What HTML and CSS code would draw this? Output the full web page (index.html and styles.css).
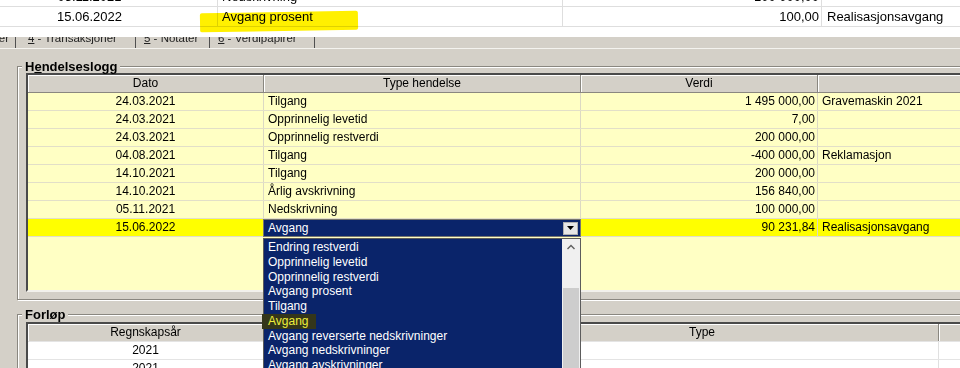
FILE: index.html
```html
<!DOCTYPE html>
<html lang="no">
<head>
    <meta charset="UTF-8">
    <title>Hendelseslogg</title>
    <link rel="stylesheet" href="styles.css">
</head>
<body>
<div class="top-table">
    <div class="tt-row">
        <div class="tt-date">05.11.2021</div>
        <div class="tt-type">Nedskrivning</div>
        <div class="tt-val">100 000,00</div>
        <div class="tt-note"></div>
    </div>
    <div class="tt-row">
        <div class="tt-date">15.06.2022</div>
        <div class="tt-type">Avgang prosent</div>
        <div class="tt-val">100,00</div>
        <div class="tt-note">Realisasjonsavgang</div>
    </div>
    <span class="marker"></span>
</div>

<div class="tabs">
    <div class="tab tab-cut"><span>3 - Avskrivninger</span></div>
    <div class="tab tab-4"><span><u>4</u> - Transaksjoner</span></div>
    <div class="tab tab-5"><span><u>5</u> - Notater</span></div>
    <div class="tab tab-6"><span><u>6</u> - Verdipapirer</span></div>
</div>

<div class="panel">
    <fieldset class="group group-log">
        <legend>H<u>e</u>ndelseslogg</legend>
        <div class="grid">
            <div class="g-row g-head">
                <div class="c-date">Dato</div>
                <div class="c-type">Type hendelse</div>
                <div class="c-val">Verdi</div>
                <div class="c-note"></div>
            </div>
            <div class="g-row">
                <div class="c-date">24.03.2021</div>
                <div class="c-type">Tilgang</div>
                <div class="c-val">1 495 000,00</div>
                <div class="c-note">Gravemaskin 2021</div>
            </div>
            <div class="g-row">
                <div class="c-date">24.03.2021</div>
                <div class="c-type">Opprinnelig levetid</div>
                <div class="c-val">7,00</div>
                <div class="c-note"></div>
            </div>
            <div class="g-row">
                <div class="c-date">24.03.2021</div>
                <div class="c-type">Opprinnelig restverdi</div>
                <div class="c-val">200 000,00</div>
                <div class="c-note"></div>
            </div>
            <div class="g-row">
                <div class="c-date">04.08.2021</div>
                <div class="c-type">Tilgang</div>
                <div class="c-val">-400 000,00</div>
                <div class="c-note">Reklamasjon</div>
            </div>
            <div class="g-row">
                <div class="c-date">14.10.2021</div>
                <div class="c-type">Tilgang</div>
                <div class="c-val">200 000,00</div>
                <div class="c-note"></div>
            </div>
            <div class="g-row">
                <div class="c-date">14.10.2021</div>
                <div class="c-type">Årlig avskrivning</div>
                <div class="c-val">156 840,00</div>
                <div class="c-note"></div>
            </div>
            <div class="g-row">
                <div class="c-date">05.11.2021</div>
                <div class="c-type">Nedskrivning</div>
                <div class="c-val">100 000,00</div>
                <div class="c-note"></div>
            </div>
            <div class="g-row sel">
                <div class="c-date">15.06.2022</div>
                <div class="c-type">
                    <div class="combo">
                        <span class="combo-text">Avgang</span>
                        <span class="combo-btn">
                            <svg width="7" height="4" viewBox="0 0 7 4"><path d="M0 0h7L3.5 4z" fill="#000"/></svg>
                        </span>
                        <div class="dropdown">
                            <ul class="dd-list">
                                <li>Endring restverdi</li>
                                <li>Opprinnelig levetid</li>
                                <li>Opprinnelig restverdi</li>
                                <li>Avgang prosent</li>
                                <li>Tilgang</li>
                                <li><span class="dd-mark">Avgang</span></li>
                                <li>Avgang reverserte nedskrivninger</li>
                                <li>Avgang nedskrivninger</li>
                                <li>Avgang avskrivninger</li>
                                <li>Avgang oppskrivninger</li>
                            </ul>
                            <div class="scrollbar">
                                <div class="sb-up">
                                    <svg width="18" height="17" viewBox="0 0 18 17"><path d="M5.5 10 L9 6.5 L12.5 10" fill="none" stroke="#606060" stroke-width="1.4"/></svg>
                                </div>
                                <div class="sb-track"></div>
                                <div class="sb-thumb"></div>
                            </div>
                        </div>
                    </div>
                </div>
                <div class="c-val">90 231,84</div>
                <div class="c-note">Realisasjonsavgang</div>
            </div>
            <div class="g-fill"></div>
        </div>
    </fieldset>

    <fieldset class="group group-course">
        <legend>Forløp</legend>
        <div class="grid grid-white">
            <div class="g-row g-head">
                <div class="c-date">Regnskapsår</div>
                <div class="c-mid"></div>
                <div class="c-kind">Type</div>
                <div class="c-note"></div>
            </div>
            <div class="g-row">
                <div class="c-date">2021</div>
                <div class="c-mid"></div>
                <div class="c-kind"></div>
                <div class="c-note"></div>
            </div>
            <div class="g-row">
                <div class="c-date">2021</div>
                <div class="c-mid"></div>
                <div class="c-kind"></div>
                <div class="c-note"></div>
            </div>
        </div>
    </fieldset>
</div>
</body>
</html>
```

FILE: styles.css
```css
body { margin: 0; width: 960px; height: 368px; overflow: hidden; background: #d4d0c8; font-family: "Liberation Sans", Arial, sans-serif; font-size: 12px; color: #000; }

/* top table (white, partly scrolled out) */
.top-table { position: relative; height: 37px; background: #fff; overflow: hidden; font-size: 13px; }
.tt-row { display: flex; height: 20px; line-height: 19px; margin-left: -38px; border-bottom: 1px solid #dedede; box-sizing: border-box; }
.tt-row:first-child { margin-top: -13px; }
.tt-row > div { box-sizing: border-box; border-right: 1px solid #dedede; white-space: nowrap; }
.tt-date { width: 256px; text-align: center; }
.tt-type { width: 345px; padding-left: 4px; }
.tt-val { width: 259px; text-align: right; padding-right: 2px; }
.tt-row > .tt-note { flex: 1; padding-left: 5px; border-right: none; }
.marker { position: absolute; left: 200px; top: 12px; width: 158px; height: 19px; background: #fff000; mix-blend-mode: multiply; transform: rotate(-1deg); border-radius: 2px; }

/* tab strip */
.tabs { display: flex; height: 11px; overflow: hidden; font-size: 11.5px; line-height: 13px; color: #222; }
.tab { box-sizing: border-box; border-right: 1px solid #505050; white-space: nowrap; overflow: hidden; }
.tab span { display: block; margin-top: -5px; }
.tab-cut { width: 16px; display: flex; justify-content: flex-end; padding-right: 6px; }
.tab-4 { width: 120px; padding-left: 12px; }
.tab-5 { width: 74px; padding-left: 8px; }
.tab-6 { width: 105px; padding-left: 8px; }

.panel { border-top: 1px solid #f4f3ef; }

/* group boxes */
.group { margin: 11px -80px 0 17px; padding: 0 0 7px 8px; border: 1px solid #8a8780; box-shadow: inset 1px 1px 0 #fff, 1px 1px 0 #fff; min-width: 0; }
.group legend { margin-left: -4px; padding: 0 3px; font-weight: bold; font-size: 13px; line-height: 13px; background: #d4d0c8; }
.group-course { margin-top: 8px; padding-top: 1px; padding-bottom: 0; }

/* grids */
.grid { border-top: 2px solid #4a4a4a; border-left: 2px solid #4a4a4a; border-bottom: 2px solid #f2f1ec; background: #ffffc4; }
.grid-white { background: #fff; border-bottom: none; }
.g-row { display: flex; height: 18px; line-height: 17px; border-bottom: 1px solid #e2dfc8; box-sizing: border-box; }
.g-row > div { box-sizing: border-box; border-right: 1px solid #dcd9c3; white-space: nowrap; }
.c-date { width: 236px; text-align: center; }
.c-type { width: 317px; padding-left: 4px; }
.c-val { width: 237px; text-align: right; padding-right: 2px; }
.g-row > .c-note { flex: 1; padding-left: 4px; border-right: none; }
.c-mid { width: 202px; }
.c-kind { width: 473px; text-align: center; }
.g-head { background: #d4d0c8; border-bottom: 1px solid #8a8780; }
.g-head > div { border-right: 1px solid #8a8780; box-shadow: inset 1px 1px 0 #fff; text-align: center; padding: 0; }
.g-row.sel { background: #ffff00; }
.g-row.sel > .c-type { padding: 0; }
.g-fill { height: 53px; }
.grid-white .g-row { border-bottom-color: #e4e4e4; }
.grid-white .g-row > div { border-right-color: #e0e0e0; }
.grid-white .g-head > div { border-right-color: #8a8780; }

/* combo box with open list */
.combo { position: relative; margin-left: -1px; width: 318px; height: 18px; box-sizing: border-box; border: 1px solid #77756f; background: #0a246a; color: #fff; display: flex; align-items: center; line-height: 16px; }
.combo-text { flex: 1; padding-left: 4px; }
.combo-btn { width: 15px; height: 13px; margin-right: 2px; box-sizing: border-box; background: #e6e6e6; border: 1px solid #b0b0b0; display: flex; align-items: center; justify-content: center; }
.dropdown { position: absolute; top: 18px; left: -1px; width: 318px; height: 140px; box-sizing: border-box; border: 1px solid #5c5c5c; background: #0a246a; display: flex; z-index: 5; }
.dd-list { flex: 1; margin: 0; padding: 1px 0 0 4px; list-style: none; line-height: 14.75px; color: #fff; }
.dd-mark { display: inline-block; margin-left: -6px; padding: 0 8px 0 6px; background: #34361a; color: #eeee3a; }
.scrollbar { width: 18px; background: #f0f0f0; display: flex; flex-direction: column; }
.sb-up { height: 17px; }
.sb-track { height: 32px; }
.sb-thumb { flex: 1; margin: 0 1px; background: #cdcdcd; }
```
